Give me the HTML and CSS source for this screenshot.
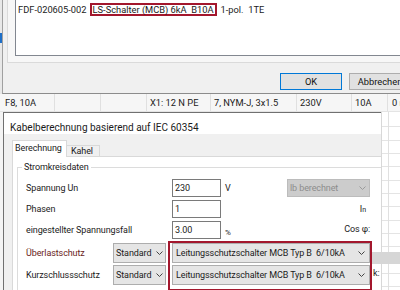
FILE: index.html
```html
<!DOCTYPE html>
<html lang="de">
<head>
<meta charset="utf-8">
<title>Kabelberechnung</title>
<link rel="stylesheet" href="styles.css">
</head>
<body>
<!-- Auswahl-Dialog (oben) -->
<div class="top">
	<div class="edge"><span class="edge-mark"></span></div>
	<div class="dlg1">
		<div class="panel">
			<div class="listbox">
				<div class="item">
					<span>FDF-020605-002</span>
					<span class="mark">LS-Schalter (MCB) 6kA&nbsp; B10A</span>
					<span>1-pol.&nbsp; 1TE</span>
				</div>
			</div>
		</div>
		<div class="btns">
			<button class="btn default">OK</button>
			<button class="btn">Abbrechen</button>
		</div>
	</div>
</div>

<!-- Stromkreis-Zeile -->
<div class="gridrow">
	<div class="cell c1">F8, 10A</div>
	<div class="cell c2"></div>
	<div class="cell c3"></div>
	<div class="cell c4">X1: 12 N PE</div>
	<div class="cell c5">7, NYM-J, 3x1.5</div>
	<div class="cell c6">230V</div>
	<div class="cell c7">10A</div>
	<div class="cell c8">0 r</div>
</div>

<!-- Kabelberechnung -->
<div class="bottom">
	<div class="edge2"></div>
	<div class="dlg2">
		<div class="title">Kabelberechnung basierend auf IEC 60354</div>
		<div class="client">
			<div class="tabs">
				<div class="tab on">Berechnung</div>
				<div class="tab off">Kahel</div>
			</div>
			<div class="tabpanel">
				<div class="group">
					<div class="legend">Stromkreisdaten</div>
					<div class="rows">
						<div class="row">
							<span class="lbl">Spannung Un</span>
							<div class="inp">230</div>
							<span class="unit">V</span>
							<div class="combo dis">lb berechnet
								<svg class="chev" viewBox="0 0 7 4"><path d="M0.5 0.5 L3.5 3.5 L6.5 0.5"/></svg>
							</div>
						</div>
						<div class="row">
							<span class="lbl">Phasen</span>
							<div class="inp">1</div>
							<span class="right in">I<small>n</small></span>
						</div>
						<div class="row last">
							<span class="lbl">eingestellter Spannungsfall</span>
							<div class="inp">3.00</div>
							<span class="unit pct">%</span>
							<span class="right cos">Cos φ:</span>
						</div>
						<div class="prot">
							<div class="prot-left">
								<div class="prow">
									<span class="plbl warn">Überlastschutz</span>
									<div class="combo std">Standard
										<svg class="chev" viewBox="0 0 7 4"><path d="M0.5 0.5 L3.5 3.5 L6.5 0.5"/></svg>
									</div>
								</div>
								<div class="prow">
									<span class="plbl">Kurzschlussschutz</span>
									<div class="combo std">Standard
										<svg class="chev" viewBox="0 0 7 4"><path d="M0.5 0.5 L3.5 3.5 L6.5 0.5"/></svg>
									</div>
								</div>
							</div>
							<div class="mark2">
								<div class="combo wide">Leitungsschutzschalter MCB Typ B&nbsp; 6/10kA
									<svg class="chev" viewBox="0 0 7 4"><path d="M0.5 0.5 L3.5 3.5 L6.5 0.5"/></svg>
								</div>
								<div class="combo wide">Leitungsschutzschalter MCB Typ B&nbsp; 6/10kA
									<svg class="chev" viewBox="0 0 7 4"><path d="M0.5 0.5 L3.5 3.5 L6.5 0.5"/></svg>
								</div>
							</div>
							<div class="prot-right">
								<div class="minibtn"></div>
								<div class="klbl">k:</div>
							</div>
						</div>
					</div>
				</div>
			</div>
		</div>
	</div>
	<div class="sheet"></div>
</div>
</body>
</html>
```

FILE: styles.css
```css
body {
	margin: 0;
	width: 400px;
	height: 290px;
	overflow: hidden;
	background: #f0f0f0;
	font-family: Roboto, "Liberation Sans", sans-serif;
	font-size: 9px;
	letter-spacing: -0.1px;
	color: #1b1b1b;
}

/* oberer Dialog */
.top {
	display: flex;
	height: 94px;
}
.edge {
	flex: none;
	width: 2px;
	background: #e8e8e8;
}
.edge-mark {
	display: block;
	height: 10px;
	margin-top: 33px;
	background: #1e6fc8;
}
.dlg1 {
	flex: 1;
	min-width: 0;
	overflow: hidden;
	background: #f0f0f0;
	border-left: 1px solid #a0a0a0;
	border-bottom: 1px solid #8c8c8c;
}
.panel {
	height: 62px;
	margin-left: 4px;
	background: #f7f7f7;
	border-left: 1px solid #dadada;
	border-bottom: 1px solid #dadada;
}
.listbox {
	height: 55px;
	margin-left: 7px;
	background: #fff;
	border-left: 1px solid #828790;
	border-bottom: 1px solid #828790;
}
.item {
	display: flex;
	align-items: center;
	padding: 3px 0 0 2px;
	font-size: 9.3px;
	letter-spacing: 0;
	white-space: nowrap;
}
.mark {
	margin: 0 4px 0 3px;
	padding: 0 1px;
	line-height: 9px;
	border: 2px solid #a3172d;
}
.btns {
	display: flex;
	gap: 7px;
	padding: 10px 0 0 277px;
}
.btn {
	flex: none;
	width: 62px;
	height: 17px;
	padding: 0;
	font: inherit;
	font-size: 9.3px;
	color: #111;
	background: #e1e1e1;
	border: 1px solid #adadad;
}
.btn.default {
	border-color: #0078d7;
}

/* Tabellenzeile */
.gridrow {
	display: flex;
	height: 17px;
	background: #f6f6f6;
	border-bottom: 1px solid #e4e4e4;
	white-space: nowrap;
	font-size: 9.3px;
	letter-spacing: 0;
}
.cell {
	flex: none;
	box-sizing: border-box;
	padding-left: 3px;
	line-height: 18px;
	overflow: hidden;
	border-right: 1px solid #e0e0e0;
}
.c1 { width: 55px; padding-left: 5px; }
.c2 { width: 46px; }
.c3 { width: 46px; }
.c4 { width: 64px; }
.c5 { width: 86px; }
.c6 { width: 55px; }
.c7 { width: 36px; }
.c8 { flex: 1; padding-left: 4px; border-right: none; }

/* Kabelberechnung */
.bottom {
	display: flex;
	height: 178px;
	overflow: hidden;
}
.edge2 {
	flex: none;
	width: 3px;
	background: #f4f4f4;
}
.dlg2 {
	position: relative;
	z-index: 1;
	flex: none;
	width: 378px;
	box-sizing: border-box;
	display: flex;
	flex-direction: column;
	border-left: 1px solid #707070;
	border-top: 1px solid #707070;
}
.title {
	height: 27px;
	box-sizing: border-box;
	padding: 9px 0 0 6px;
	line-height: 12px;
	font-size: 10px;
	letter-spacing: 0;
	background: #fff;
	white-space: nowrap;
}
.client {
	flex: 1;
	display: flex;
	flex-direction: column;
	padding: 6px 0 0 8px;
	background: #f0f0f0;
}
.tabs {
	position: relative;
	z-index: 1;
	display: flex;
	align-items: flex-end;
	height: 17px;
}
.tab {
	box-sizing: border-box;
	line-height: 11px;
	border: 1px solid #d9d9d9;
	border-bottom: none;
}
.tab.on {
	width: 55px;
	height: 17px;
	padding: 2px 0 0 2px;
	background: #fff;
}
.tab.off {
	width: 33px;
	height: 12px;
	padding-left: 4px;
	border-left: none;
}
.tabpanel {
	flex: 1;
	display: flex;
	flex-direction: column;
	margin-top: -1px;
	background: #fff;
	border-left: 1px solid #d9d9d9;
	border-top: 1px solid #d9d9d9;
}
.group {
	flex: 1;
	margin: 10px 0 0 4px;
	border-left: 1px solid #dcdcdc;
	border-top: 1px solid #dcdcdc;
}
.legend {
	display: table;
	margin: -6px 0 0 4px;
	padding: 0 2px;
	line-height: 11px;
	background: #fff;
}
.rows {
	margin-top: 6px;
	padding-left: 8px;
	white-space: nowrap;
}
.row {
	display: flex;
	align-items: center;
	height: 18px;
	margin-bottom: 3px;
	padding-right: 11px;
}
.row.last {
	margin-bottom: 2px;
}
.lbl {
	flex: none;
	width: 146px;
}
.inp {
	flex: none;
	width: 49px;
	height: 18px;
	box-sizing: border-box;
	padding-left: 2px;
	line-height: 16px;
	background: #fff;
	border: 1px solid #7a7a7a;
}
.unit {
	margin-left: 4px;
}
.pct {
	margin-top: 5px;
	font-size: 8px;
}
.right {
	margin-left: auto;
}
.in {
	margin-right: 4px;
}
.in small {
	font-size: 7px;
}
.cos {
	margin-top: -3px;
}

.combo {
	display: flex;
	align-items: center;
	justify-content: space-between;
	box-sizing: border-box;
	height: 20px;
	padding: 0 3px 0 2px;
	background: #e5e5e5;
	border: 1px solid #adadad;
}
.chev {
	flex: none;
	width: 7px;
	height: 4px;
	fill: none;
	stroke: #444;
	stroke-width: 1;
}
.combo.dis {
	width: 83px;
	height: 18px;
	margin-left: auto;
	color: #8c8c8c;
	background: #cccccc;
	border-color: #bcbcbc;
}
.combo.dis .chev {
	stroke: #9a9a9a;
}
.combo.std {
	width: 53px;
	padding-right: 2px;
}
.combo.wide {
	width: 198px;
	margin-bottom: 2px;
	padding-left: 3px;
	padding-right: 4px;
}

.prot {
	display: flex;
}
.prot-left {
	flex: none;
	width: 142px;
	padding-top: 2px;
}
.prow {
	display: flex;
	align-items: center;
	height: 20px;
	margin-bottom: 2px;
}
.plbl {
	flex: none;
	width: 87px;
}
.warn {
	color: #6a1d22;
}
.mark2 {
	flex: none;
	box-sizing: border-box;
	width: 204px;
	height: 50px;
	padding-left: 2px;
	border: 2px solid #a3172d;
}
.prot-right {
	flex: none;
	width: 28px;
}
.minibtn {
	height: 12px;
	margin-top: 11px;
	background: #d6d6d6;
}
.klbl {
	margin-top: 4px;
	padding-left: 1px;
	line-height: 11px;
}

.sheet {
	flex: 1;
	background-color: #fff;
	background-image:
		linear-gradient(90deg, #d8d8d8 0 1px, transparent 1px 7px, #e0e0e0 7px 8px, transparent 8px),
		repeating-linear-gradient(180deg, #fff 0 12.33px, #e4e4e4 12.33px 13.33px);
	background-position: 0 0, 0 2px;
}
```
